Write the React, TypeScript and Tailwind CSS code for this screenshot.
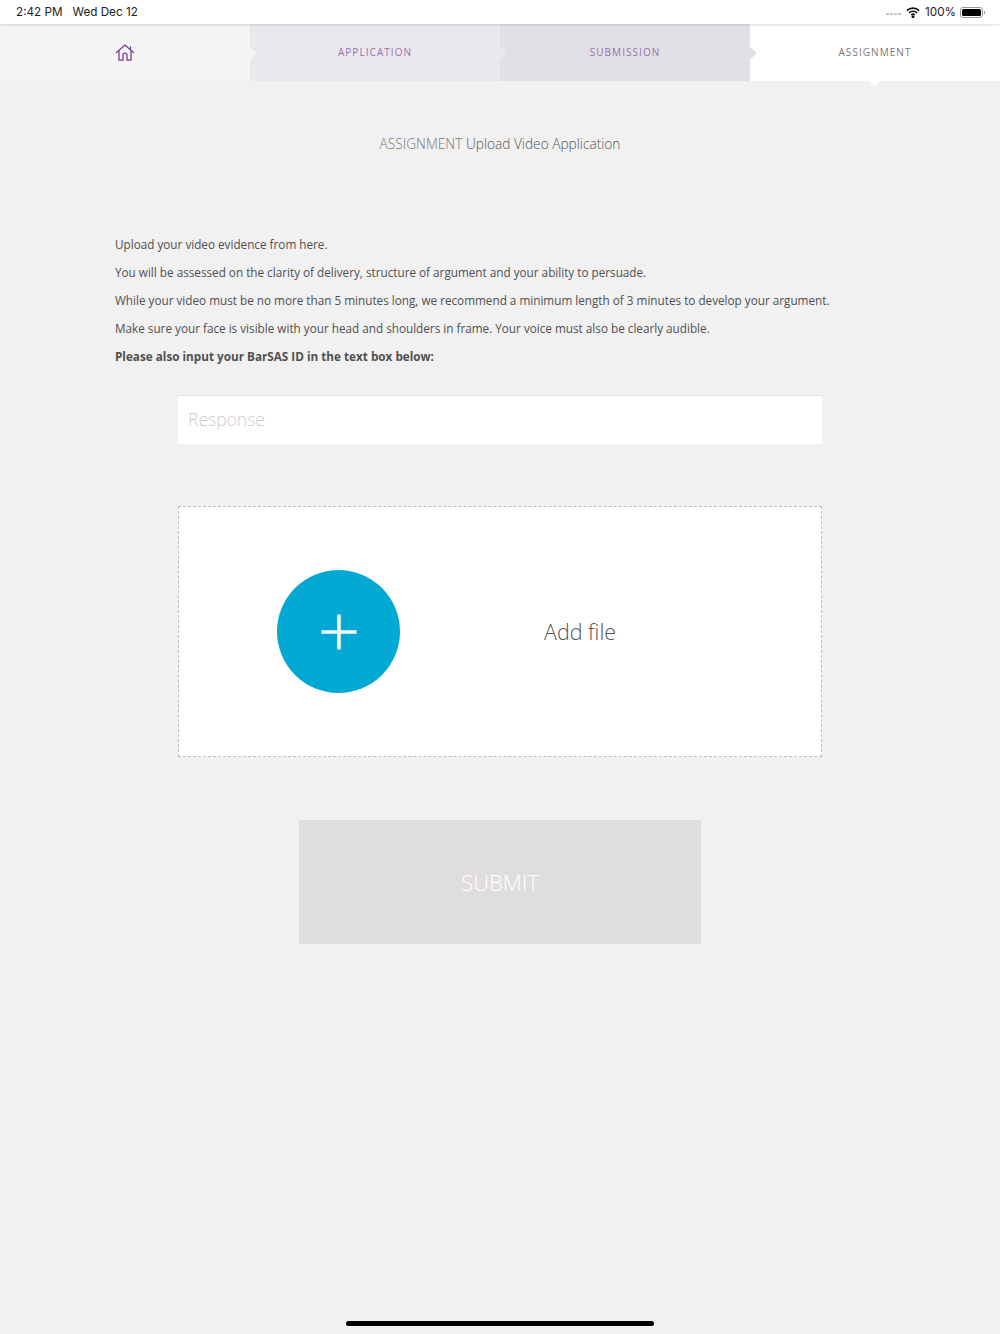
const FONT = "font-['Open_Sans',sans-serif]";

function HomeIcon() {
  return (
    <svg width="20" height="20" viewBox="0 0 20 20" fill="none" stroke="#7b3f98" strokeWidth="1.3" strokeLinejoin="round" strokeLinecap="round">
      <path d="M1.5 9.5 10 2l8.5 7.5" />
      <path d="M4 8v9.2h4v-5a2 2 0 0 1 4 0v5h4V8" />
      <path d="M15.5 4v2.5" />
    </svg>
  );
}

function Wifi() {
  return (
    <svg width="14" height="11" viewBox="0 0 14 11" fill="none" stroke="#111" strokeWidth="1.6">
      <path d="M.8 3.6a9 9 0 0 1 12.4 0" />
      <path d="M3 5.9a5.8 5.8 0 0 1 8 0" />
      <path d="M5.2 8a2.6 2.6 0 0 1 3.6 0" />
      <circle cx="7" cy="9.7" r=".7" fill="#111" />
    </svg>
  );
}

function StatusBar() {
  return (
    <div className="relative z-20 flex h-[24px] items-center justify-between bg-white pl-4 pr-[15px] pt-[1px] font-['Inter',sans-serif] text-[11.7px] text-[#222] shadow-[0_1px_3px_rgba(0,0,0,0.14)]">
      <div className="flex gap-[10px]">
        <span>2:42 PM</span>
        <span>Wed Dec 12</span>
      </div>
      <div className="flex items-center">
        <div className="mr-[5px] mt-[3px] flex gap-[1px]">
          <span className="h-[2px] w-[3px] bg-[#c4c4c4]" />
          <span className="h-[2px] w-[3px] bg-[#c4c4c4]" />
          <span className="h-[2px] w-[3px] bg-[#c4c4c4]" />
          <span className="h-[2px] w-[3px] bg-[#c4c4c4]" />
        </div>
        <Wifi />
        <span className="ml-[5px]">100%</span>
        <div className="ml-[4px] flex items-center">
          <div className="flex h-[11px] w-[23px] rounded-[3px] border border-[#999] p-[1px]">
            <div className="flex-1 rounded-[1.5px] bg-black" />
          </div>
          <span className="ml-[1px] h-[3px] w-[1px] bg-[#999]" />
        </div>
      </div>
    </div>
  );
}

function Tab({ bg, label, color, arrow, children }: { bg: string; label?: string; color?: string; arrow?: boolean; children?: React.ReactNode }) {
  return (
    <div className={`relative flex w-1/4 items-center justify-center ${bg}`}>
      {label ? <span className={`text-[10px] tracking-[0.105em] ${color}`}>{label}</span> : children}
      {arrow && <span className={`absolute right-[-5px] top-1/2 h-[8px] w-[8px] -translate-y-1/2 rotate-45 ${bg} z-10`} />}
    </div>
  );
}

export default function App() {
  return (
    <div className={`relative flex min-h-[1334px] flex-col bg-[#f1f1f1] ${FONT}`}>
      <StatusBar />
      <div className="flex h-[57px]">
        <Tab bg="bg-[#f5f5f5]" arrow>
          <HomeIcon />
        </Tab>
        <Tab bg="bg-[#e9e8ed]" label="APPLICATION" color="text-[#9b6fb0]" arrow />
        <Tab bg="bg-[#e1e0e5]" label="SUBMISSION" color="text-[#9b6fb0]" arrow />
        <div className="relative flex w-1/4 items-center justify-center bg-white">
          <span className="text-[10px] tracking-[0.105em] text-[#777]">ASSIGNMENT</span>
          <span className="absolute bottom-[-4px] left-1/2 h-[8px] w-[8px] -translate-x-1/2 rotate-45 bg-white" />
        </div>
      </div>

      <h1 className="mt-[53px] text-center text-[13.7px] leading-[20px] font-light text-[#555]">
        <span className="text-[#777]">ASSIGNMENT</span> Upload Video Application
      </h1>

      <div className="mt-[81px] flex flex-col gap-[10px] px-[115px] text-[11.72px] leading-[18px] text-[#505050]">
        <p>Upload your video evidence from here.</p>
        <p>You will be assessed on the clarity of delivery, structure of argument and your ability to persuade.</p>
        <p className="whitespace-nowrap">While your video must be no more than 5 minutes long, we recommend a minimum length of 3 minutes to develop your argument.</p>
        <p>Make sure your face is visible with your head and shoulders in frame. Your voice must also be clearly audible.</p>
        <p className="font-bold">Please also input your BarSAS ID in the text box below:</p>
      </div>

      <input
        placeholder="Response"
        className="mx-[178px] mt-[30px] h-[49px] border-t border-[#e0e0e0] bg-white px-[10px] pb-[2px] text-[17.5px] font-light outline-none placeholder:text-[#ccc]"
      />

      <div className="mx-[178px] mt-[62px] flex h-[251px] items-center border border-dashed border-[#bdbdbd] bg-white">
        <div className="ml-[98px] flex h-[123px] w-[123px] items-center justify-center rounded-full bg-[#02a9d2]">
          <svg width="36" height="36" viewBox="0 0 36 36" stroke="#fff" strokeWidth="3.5">
            <path d="M18 .5v35M.5 18h35" />
          </svg>
        </div>
        <span className="ml-[144px] mt-[2px] text-[21.5px] font-light text-[#555]">Add file</span>
      </div>

      <div className="mx-[299px] mt-[63px] flex h-[124px] items-center justify-center bg-[#dfddde] text-[22px] font-light text-white">
        SUBMIT
      </div>

      <div className="absolute bottom-[8px] left-1/2 h-[5px] w-[308px] -translate-x-1/2 rounded-full bg-black" />
    </div>
  );
}
